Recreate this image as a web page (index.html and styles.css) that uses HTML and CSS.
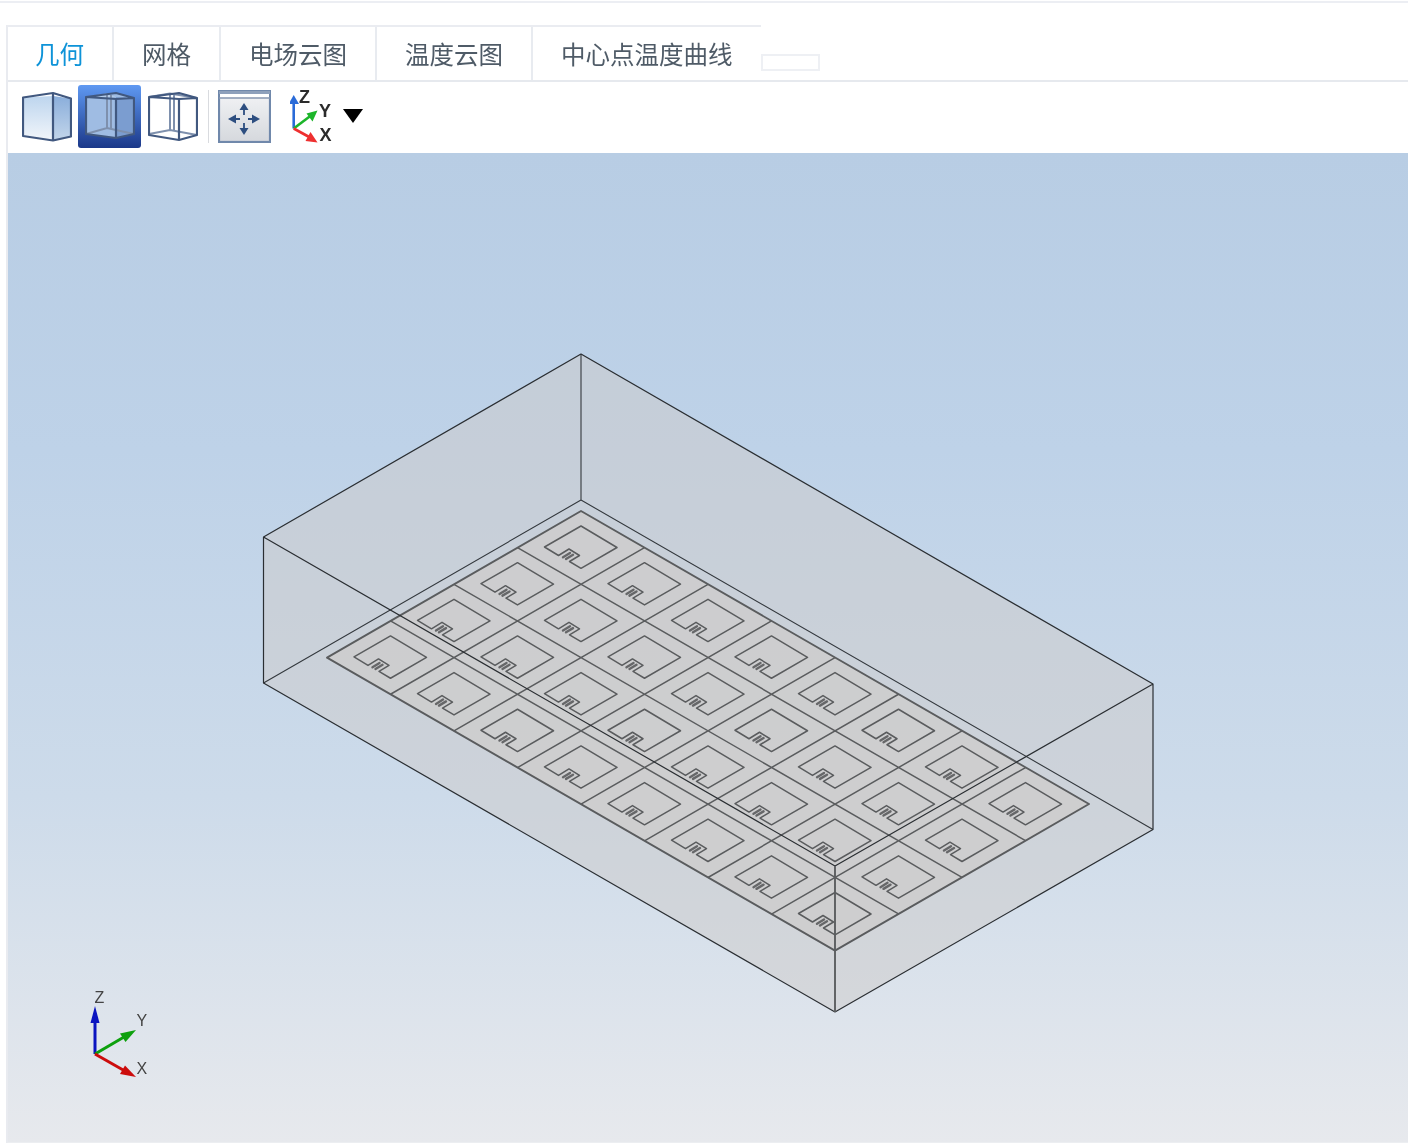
FILE: index.html
```html
<!DOCTYPE html>
<html lang="zh-CN">
<head>
<meta charset="utf-8">
<title>几何</title>
<link rel="stylesheet" href="styles.css">
</head>
<body>
<div class="top-rule"></div>
<main class="panel">
  <nav class="tabbar">
    <ul class="tabs">
      <li class="tab is-active">几何</li>
      <li class="tab">网格</li>
      <li class="tab">电场云图</li>
      <li class="tab">温度云图</li>
      <li class="tab tab-last">中心点温度曲线</li>
    </ul>
    <div class="tab-stub"></div>
  </nav>
  <div class="toolbar">
    <svg class="ico ico-cube ico-first" viewBox="22 91 50 51">
      <defs>
        <linearGradient id="cf" x1="0" y1="0" x2="0" y2="1"><stop offset="0" stop-color="#bdd5ee"/><stop offset="1" stop-color="#f1f5fa"/></linearGradient>
        <linearGradient id="cr" x1="0" y1="0" x2="0" y2="1"><stop offset="0" stop-color="#8aaedb"/><stop offset="1" stop-color="#c2d5ea"/></linearGradient>
      </defs>
      <polygon points="23,97.500 53,96 53,140 23,136" fill="url(#cf)"/>
      <polygon points="53,96 71,98.500 71,136.500 53,140" fill="url(#cr)"/>
      <path class="cube-edge" d="M23 97.500 L53 93 L71 98.500 L71 136.500 L53 140.500 L23 136 Z M53 93 V140.500"/>
    </svg>
    <button class="view-btn" type="button">
      <svg class="ico ico-cube" viewBox="85 91 50 51">
        <polygon points="86,97 116,93 134,98 134,134 116,138 86,134" fill="#9fbce3"/>
        <polygon points="116,97 134,98 134,134 116,138" fill="#7b9dd0"/>
        <polygon points="86,97 106,93.500 116,97" fill="#b4cbe9"/>
        <path class="cube-hidden" d="M107 94 V128 M111 95 V128 M86 134 L107 128 L134 134"/>
        <path class="cube-edge" d="M86 97 L116 93 L134 98 L134 134 L116 138 L86 134 Z M86 97 L116 99 L134 98 M116 99 V138"/>
      </svg>
    </button>
    <svg class="ico ico-cube" viewBox="148 91 50 51">
      <path class="cube-hidden" d="M149 97 L170 93.500 L197 98 M170 94 V130 M174 95 V130 M149 134 L170 130 L197 135"/>
      <path class="cube-edge" d="M149 97 L179 93 L197 98 L197 135 L179 140 L149 135 Z M149 97 L179 99 L197 98 M179 99 V140"/>
    </svg>
    <span class="tool-sep"></span>
    <svg class="ico ico-fit" viewBox="218 90 53 53">
      <defs>
        <linearGradient id="fb" x1="0" y1="0" x2="0" y2="1"><stop offset="0" stop-color="#f3f4f6"/><stop offset="1" stop-color="#d5d8dd"/></linearGradient>
      </defs>
      <rect x="219" y="91" width="51" height="51" fill="url(#fb)" stroke="#7088ab" stroke-width="2.200"/>
      <rect x="219" y="91" width="51" height="3" fill="#8ea0bb"/>
      <rect x="220" y="94" width="49" height="3.500" fill="#ffffff"/>
      <line x1="219" y1="98" x2="270" y2="98" stroke="#8797b0" stroke-width="1.500"/>
      <path class="fit-stem" d="M244 109 V115 M244 123 V129 M236 119 H240 M248 119 H252"/>
      <polygon class="fit-arrow" points="244,103 248.500,110 239.500,110"/>
      <polygon class="fit-arrow" points="244,135 248.500,128 239.500,128"/>
      <polygon class="fit-arrow" points="228,119 236,114.500 236,123.500"/>
      <polygon class="fit-arrow" points="260,119 252,114.500 252,123.500"/>
    </svg>
    <svg class="ico ico-axes" viewBox="290 84 46 65">
      <path d="M293.700 128.500 V99" stroke="#2a6bd8" stroke-width="2.600" fill="none"/>
      <polygon points="293.700,95 288.500,104 299,104" fill="#2a6bd8"/>
      <path d="M293.700 128.500 L311 115.500" stroke="#1cb52a" stroke-width="2.600" fill="none"/>
      <polygon points="317.500,110.500 306.500,113.500 312.500,121.500" fill="#1cb52a"/>
      <path d="M293.700 128.500 L311 138" stroke="#ee3030" stroke-width="2.600" fill="none"/>
      <polygon points="317.500,142.500 305.500,141 310.500,132" fill="#ee3030"/>
      <text class="axis-bold" x="299" y="102.500">Z</text>
      <text class="axis-bold" x="319" y="117">Y</text>
      <text class="axis-bold" x="319.500" y="141">X</text>
    </svg>
    <span class="dropdown-caret"></span>
  </div>
  <div class="stage">
    <svg class="scene" viewBox="8 153 1400 989">
      <defs>
        <g id="cell">
          <path class="cell-line" d="M0 15 L36 36.500 L0 57.300 L-11.500 50.500 L-1.500 44.500 L-12 38 L-22.500 44.500 L-36.500 36 Z"/>
          <path class="cell-comb" d="M-18 46.300 L-11 42 M-15 48 L-8 43.800"/>
        </g>
      </defs>
      <polygon class="box-fill" points="263.500,537 581,354 1153,684 1153,829.500 835,1012 263.500,683"/>
      <path class="box-back" d="M581 354 V500 M581 500 L263.500 683 M581 500 L1153 829.500"/>
      <polygon class="plate" points="581,511 1089,804 835,950.600 327,657.600"/>
      <path class="grid-line" d="M517.500 547.650 L1025.500 840.650 M454 584.300 L962 877.300 M390.500 620.950 L898.500 913.950 M644.500 547.650 L390.500 694.250 M708 584.300 L454 730.900 M771.500 620.950 L517.500 767.550 M835 657.600 L581 804.200 M898.500 694.250 L644.500 840.850 M962 730.900 L708 877.500 M1025.500 767.550 L771.500 914.150"/>
      <use href="#cell" x="581" y="511"/>
      <use href="#cell" x="644.500" y="547.650"/>
      <use href="#cell" x="708" y="584.300"/>
      <use href="#cell" x="771.500" y="620.950"/>
      <use href="#cell" x="835" y="657.600"/>
      <use href="#cell" x="898.500" y="694.250"/>
      <use href="#cell" x="962" y="730.900"/>
      <use href="#cell" x="1025.500" y="767.550"/>
      <use href="#cell" x="517.500" y="547.650"/>
      <use href="#cell" x="581" y="584.300"/>
      <use href="#cell" x="644.500" y="620.950"/>
      <use href="#cell" x="708" y="657.600"/>
      <use href="#cell" x="771.500" y="694.250"/>
      <use href="#cell" x="835" y="730.900"/>
      <use href="#cell" x="898.500" y="767.550"/>
      <use href="#cell" x="962" y="804.200"/>
      <use href="#cell" x="454" y="584.300"/>
      <use href="#cell" x="517.500" y="620.950"/>
      <use href="#cell" x="581" y="657.600"/>
      <use href="#cell" x="644.500" y="694.250"/>
      <use href="#cell" x="708" y="730.900"/>
      <use href="#cell" x="771.500" y="767.550"/>
      <use href="#cell" x="835" y="804.200"/>
      <use href="#cell" x="898.500" y="840.850"/>
      <use href="#cell" x="390.500" y="620.950"/>
      <use href="#cell" x="454" y="657.600"/>
      <use href="#cell" x="517.500" y="694.250"/>
      <use href="#cell" x="581" y="730.900"/>
      <use href="#cell" x="644.500" y="767.550"/>
      <use href="#cell" x="708" y="804.200"/>
      <use href="#cell" x="771.500" y="840.850"/>
      <use href="#cell" x="835" y="877.500"/>
      <polygon class="plate-edge" points="581,511 1089,804 835,950.600 327,657.600"/>
      <path class="box-front" d="M263.500 537 L581 354 L1153 684 V829.500 L835 1012 L263.500 683 Z M263.500 537 L835 866 L1153 684"/>
      <path class="box-post" d="M835 866 V1012"/>
      <path d="M95 1054 V1018" class="tri tri-z"/>
      <polygon points="95,1006 90.500,1023 99.500,1023" fill="#0a14c0"/>
      <path d="M95 1054 L124 1037" class="tri tri-y"/>
      <polygon points="136,1030 120,1033.500 125.500,1042" fill="#0da00d"/>
      <path d="M95 1054 L124 1070.500" class="tri tri-x"/>
      <polygon points="136,1077 125,1065.500 120,1074" fill="#cc0c0c"/>
      <text class="axis-thin" x="94.500" y="1002.500">Z</text>
      <text class="axis-thin" x="136.500" y="1026">Y</text>
      <text class="axis-thin" x="136.500" y="1073.500">X</text>
    </svg>
  </div>
</main>
</body>
</html>
```
FILE: styles.css
```css
* { box-sizing: border-box; }

html, body {
  margin: 0;
  padding: 0;
  background: #ffffff;
}

body {
  height: 1143px;
  overflow: hidden;
  font-family: "Noto Sans CJK SC", "Liberation Sans", sans-serif;
}

.top-rule {
  height: 2px;
  margin-top: 1px;
  background: #eceef3;
}

.panel {
  margin: 22px 0 0 6px;
  border-left: 2px solid #e9ebf0;
  border-bottom: 1px solid #eceef1;
}

.tabbar {
  display: flex;
  height: 57px;
  border-bottom: 2px solid #e6e9ee;
}

.tabs {
  display: flex;
  height: 55px;
  margin: 0 0 0 -1px;
  padding: 0;
  list-style: none;
  border-top: 2px solid #eaecf1;
}

.tab {
  padding: 0 28px;
  border-right: 2px solid #e8ebf0;
  font-size: 24.500px;
  line-height: 53px;
  color: #4f5b67;
  white-space: nowrap;
  filter: blur(0.25px);
}

.tab-last { border-right: 0; }

.tab.is-active { color: #0e93d8; }

.tab-stub {
  width: 59px;
  height: 17px;
  margin-top: 29px;
  border: 2px solid #eef0f4;
}

.toolbar {
  display: flex;
  align-items: center;
  height: 71px;
  padding: 3px 0 5px;
}

.ico { display: block; flex: none; filter: blur(0.4px); }
.ico-cube { width: 50px; height: 51px; }
.ico-first { margin-left: 14px; }
.ico-fit { width: 53px; height: 53px; margin-left: 9px; }
.ico-axes { width: 46px; height: 65px; margin-left: 19px; }

.view-btn {
  display: flex;
  align-items: center;
  justify-content: center;
  flex: none;
  width: 63px;
  height: 63px;
  margin: 0 7px 0 6px;
  padding: 0;
  border: 0;
  border-radius: 3px;
  background: linear-gradient(#5f99f2, #1b3889);
}

.tool-sep {
  flex: none;
  width: 1px;
  height: 53px;
  margin-left: 10px;
  background: #d9dbdf;
}

.dropdown-caret {
  flex: none;
  width: 0;
  height: 0;
  margin: -2px 0 0 7px;
  border-left: 10px solid transparent;
  border-right: 10px solid transparent;
  border-top: 14px solid #000000;
}

.cube-edge {
  fill: none;
  stroke: #41587f;
  stroke-width: 2.200;
  stroke-linejoin: round;
}

.cube-hidden {
  fill: none;
  stroke: #7e90ad;
  stroke-width: 2;
}

.fit-arrow { fill: #2d4e80; }

.fit-stem {
  fill: none;
  stroke: #2d4e80;
  stroke-width: 1.800;
}

.axis-bold {
  font-family: "Liberation Sans", sans-serif;
  font-size: 18px;
  font-weight: 700;
  fill: #2b2b2b;
}

.axis-thin {
  font-family: "Liberation Sans", sans-serif;
  font-size: 16px;
  fill: #444444;
}

.stage {
  height: 989px;
  background: linear-gradient(#b8cde4 0%, #bed2e8 30%, #cddbea 65%, #e7e9ed 100%);
}

.scene {
  display: block;
  width: 1400px;
  height: 989px;
  filter: blur(0.35px);
}

.box-fill { fill: rgba(205, 204, 203, 0.52); }

.box-back {
  fill: none;
  stroke: #33383d;
  stroke-width: 1.100;
}

.plate { fill: rgba(206, 205, 205, 0.85); }

.grid-line,
.plate-edge,
.cell-line {
  fill: none;
  stroke: #5a5c5e;
  stroke-width: 1.500;
  stroke-linejoin: round;
}

.plate-edge { stroke-width: 1.900; }

.cell-comb {
  fill: none;
  stroke: #666769;
  stroke-width: 2.400;
  stroke-linecap: round;
}

.box-front {
  fill: none;
  stroke: #2a2e32;
  stroke-width: 1.200;
  stroke-linejoin: round;
}

.box-post {
  fill: none;
  stroke: #5c5e60;
  stroke-width: 1.900;
}

.tri { fill: none; stroke-width: 3; }
.tri-z { stroke: #0a14c0; }
.tri-y { stroke: #0da00d; }
.tri-x { stroke: #cc0c0c; }
```
